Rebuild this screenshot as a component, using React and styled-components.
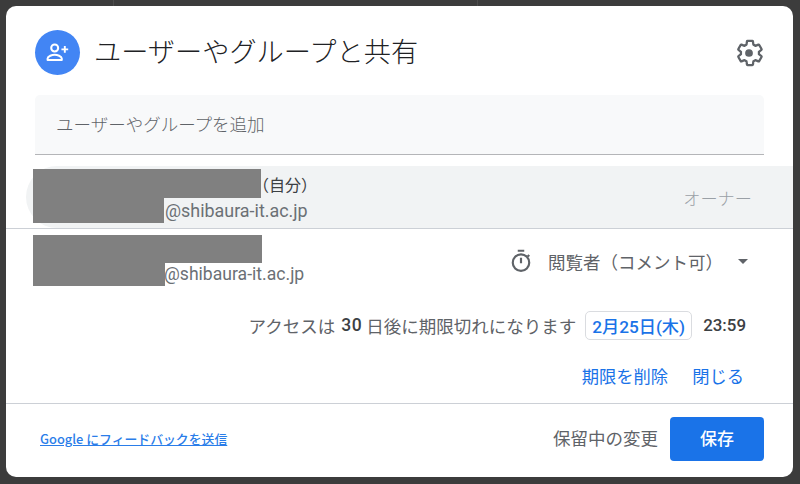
import React from 'react';
import styled, { createGlobalStyle } from 'styled-components';

const jp = `"Noto Sans CJK JP", sans-serif`;
const latin = `Roboto, "Noto Sans CJK JP", sans-serif`;

const GlobalStyle = createGlobalStyle`
  html, body {
    margin: 0;
    padding: 0;
    background: #3c3c3c;
    font-family: ${jp};
  }
`;

const Page = styled.div`
  position: relative;
  width: 800px;
  height: 484px;
  box-sizing: border-box;
  padding: 6px 7px 7px 6px;
  overflow: hidden;
`;

const BackdropLine = styled.div`
  position: absolute;
  top: 0;
  left: ${(p) => p.$left}px;
  width: 1px;
  height: 6px;
  background: #4c4c4c;
`;

const Dialog = styled.div`
  height: 100%;
  display: flex;
  flex-direction: column;
  background: #fff;
  border-radius: 10px;
  overflow: hidden;
`;

const Header = styled.header`
  height: 89px;
  flex: none;
  box-sizing: border-box;
  padding: 24px 29px 0;
  display: flex;
  align-items: flex-start;
`;

const IconBadge = styled.div`
  width: 45px;
  height: 45px;
  border-radius: 50%;
  background: #4285f4;
  display: flex;
  align-items: center;
  justify-content: center;
  flex: none;
`;

const Title = styled.h1`
  margin: -2px 0 0 14px;
  font-size: 27.2px;
  line-height: 45px;
  font-weight: 300;
  color: #202124;
  flex: 1;
`;

const GearButton = styled.div`
  width: 32px;
  height: 32px;
  margin: 7px -1px 0 0;
  display: flex;
  align-items: center;
  justify-content: center;
`;

const SearchBox = styled.div`
  height: 60px;
  flex: none;
  margin: 0 29px;
  box-sizing: border-box;
  padding: 0 0 2px 21px;
  display: flex;
  align-items: center;
  background: #f8f9fa;
  border-bottom: 1.5px solid #b4b5b8;
  border-radius: 5px 5px 0 0;
  font-size: 17.5px;
  font-weight: 300;
  color: #5f6368;
`;

const OwnerRow = styled.div`
  height: 62px;
  flex: none;
  margin: 11px 0 0 20px;
  display: flex;
  align-items: center;
  justify-content: space-between;
  background: #f1f3f4;
  border-radius: 31px 0 0 31px;
  padding-right: 41px;
`;

const Divider = styled.div`
  height: 1px;
  flex: none;
  background: #ccd0d6;
`;

const Identity = styled.div`
  position: relative;
  align-self: flex-start;
  display: flex;
  flex-direction: column;
  margin-left: ${(p) => p.$offset}px;
  padding-top: 6px;
`;

const NameLine = styled.div`
  height: 26px;
  line-height: 24px;
  padding-left: 88px;
  font-size: 16px;
  color: #3c4043;
`;

const Email = styled.div`
  height: 26px;
  line-height: 26px;
  font-family: ${latin};
  font-size: ${(p) => p.$size}px;
  color: #6b7075;
`;

const Redaction = styled.div`
  position: absolute;
  background: #808080;
  left: ${(p) => p.$left}px;
  top: ${(p) => p.$top}px;
  width: ${(p) => p.$w}px;
  height: ${(p) => p.$h}px;
`;

const OwnerLabel = styled.div`
  font-size: 17.2px;
  font-weight: 300;
  color: #9aa0a6;
`;

const ViewerRow = styled.div`
  height: 70px;
  flex: none;
  display: flex;
  justify-content: space-between;
  align-items: flex-start;
  padding-right: 45px;
`;

const RoleSelect = styled.div`
  display: flex;
  align-items: center;
  margin-top: 17px;
  height: 30px;
  font-size: 17.5px;
  color: #5f6368;
`;

const RoleText = styled.span`
  margin: 0 15px 0 14px;
  white-space: nowrap;
`;

const Caret = styled.span`
  width: 0;
  height: 0;
  border-left: 5px solid transparent;
  border-right: 5px solid transparent;
  border-top: 5px solid #5f6368;
`;

const ExpiryRow = styled.div`
  height: 32px;
  flex: none;
  margin-top: 10px;
  padding-right: 47px;
  display: flex;
  align-items: center;
  justify-content: flex-end;
  font-size: 17.5px;
  color: #5f6368;
`;

const Strong = styled.span`
  font-family: ${latin};
  font-weight: 500;
  letter-spacing: 0.6px;
  margin-left: 2px;
  color: #3c4043;
`;

const TimeText = styled.span`
  font-family: ${latin};
  font-size: 16.9px;
  font-weight: 500;
  color: #3c4043;
`;

const DateChip = styled.div`
  margin: 0 11px 0 9px;
  width: 107px;
  height: 29px;
  box-sizing: border-box;
  border: 1px solid #dadce0;
  border-radius: 5px;
  display: flex;
  align-items: center;
  justify-content: center;
  font-family: ${latin};
  font-size: 17.2px;
  font-weight: 500;
  color: #1a73e8;
`;

const ExpiryActions = styled.div`
  height: 30px;
  flex: none;
  margin: 19px 0 13px;
  padding-right: 49px;
  display: flex;
  justify-content: flex-end;
  align-items: center;
  gap: 24px;
`;

const ActionLink = styled.a`
  font-size: 17.3px;
  color: #1a73e8;
`;

const Footer = styled.footer`
  flex: 1;
  display: flex;
  align-items: center;
  justify-content: space-between;
  padding: 0 29px 4px 34px;
`;

const FeedbackLink = styled.a`
  font-size: 12.85px;
  font-weight: 500;
  color: #2a7de9;
  text-decoration: underline;
`;

const SaveArea = styled.div`
  display: flex;
  align-items: center;
  gap: 12px;
`;

const PendingText = styled.span`
  font-size: 17.5px;
  line-height: 24px;
  padding-bottom: 2px;
  color: #5f6368;
`;

const SaveButton = styled.button`
  width: 94px;
  height: 44px;
  border: 0;
  border-radius: 4px;
  padding: 0 0 2px;
  background: #1a73e8;
  color: #fff;
  font-family: ${jp};
  font-size: 17px;
  font-weight: 500;
`;

const AddPersonIcon = () => (
  <svg width="27" height="27" viewBox="0 0 24 24" fill="none" stroke="#fff" strokeWidth="1.8">
    <circle cx="9.5" cy="8" r="3.1" />
    <path d="M3.2 18.6v-1.2c0-2.2 4.2-3.4 6.3-3.4s6.3 1.2 6.3 3.4v1.2z" strokeLinejoin="round" />
    <path d="M18.5 6.2v6M15.5 9.2h6" strokeWidth="1.7" />
  </svg>
);

const GearIcon = () => (
  <svg width="32" height="32" viewBox="0 0 24 24" fill="none">
    <path
      d="M19.4 12.9c.05-.3.07-.6.07-.9s-.02-.6-.07-.9l1.9-1.5c.17-.13.22-.38.1-.58l-1.8-3.1c-.11-.2-.35-.27-.55-.2l-2.24.9c-.47-.36-.97-.66-1.52-.88l-.34-2.38a.44.44 0 0 0-.45-.38h-3.6c-.22 0-.41.16-.44.38l-.34 2.38c-.55.22-1.05.52-1.52.88l-2.24-.9a.45.45 0 0 0-.55.2l-1.8 3.1c-.12.2-.07.45.1.58l1.9 1.5c-.05.3-.08.6-.08.9s.03.6.08.9l-1.9 1.5c-.17.13-.22.38-.1.58l1.8 3.1c.11.2.35.27.55.2l2.24-.9c.47.36.97.66 1.52.88l.34 2.38c.03.22.22.38.44.38h3.6c.22 0 .41-.16.45-.38l.34-2.38c.55-.22 1.05-.52 1.52-.88l2.24.9c.2.07.44 0 .55-.2l1.8-3.1c.12-.2.07-.45-.1-.58z"
      stroke="#5f6368"
      strokeWidth="1.7"
      strokeLinejoin="round"
    />
    <circle cx="12" cy="12" r="2.9" fill="#5f6368" />
  </svg>
);

const TimerIcon = () => (
  <svg width="26" height="26" viewBox="0 0 24 24" fill="none" stroke="#5f6368" strokeWidth="2">
    <circle cx="12" cy="13.5" r="7.6" />
    <path d="M9 2.5h6M12 9v5" />
    <path d="M18.2 6.5l1.4 1.4" />
  </svg>
);

const App = () => {
  return (
    <Page>
      <GlobalStyle />
      <BackdropLine $left={113} />
      <BackdropLine $left={477} />
      <Dialog>
        <Header>
          <IconBadge>
            <AddPersonIcon />
          </IconBadge>
          <Title>ユーザーやグループと共有</Title>
          <GearButton>
            <GearIcon />
          </GearButton>
        </Header>
        <SearchBox>ユーザーやグループを追加</SearchBox>
        <OwnerRow>
          <Identity $offset={139}>
            <NameLine>（自分）</NameLine>
            <Email $size={17.9}>@shibaura-it.ac.jp</Email>
            <Redaction $left={-132} $top={3} $w={228} $h={29} />
            <Redaction $left={-132} $top={32} $w={131} $h={25} />
          </Identity>
          <OwnerLabel>オーナー</OwnerLabel>
        </OwnerRow>
        <Divider />
        <ViewerRow>
          <Identity $offset={158}>
            <NameLine />
            <Email $size={17.6}>@shibaura-it.ac.jp</Email>
            <Redaction $left={-131} $top={6} $w={229} $h={28} />
            <Redaction $left={-131} $top={34} $w={132} $h={23} />
          </Identity>
          <RoleSelect>
            <TimerIcon />
            <RoleText>閲覧者（コメント可）</RoleText>
            <Caret />
          </RoleSelect>
        </ViewerRow>
        <ExpiryRow>
          アクセスは&nbsp;<Strong>30</Strong>&nbsp;日後に期限切れになります
          <DateChip>2月25日(木)</DateChip>
          <TimeText>23:59</TimeText>
        </ExpiryRow>
        <ExpiryActions>
          <ActionLink>期限を削除</ActionLink>
          <ActionLink>閉じる</ActionLink>
        </ExpiryActions>
        <Divider />
        <Footer>
          <FeedbackLink>Google にフィードバックを送信</FeedbackLink>
          <SaveArea>
            <PendingText>保留中の変更</PendingText>
            <SaveButton>保存</SaveButton>
          </SaveArea>
        </Footer>
      </Dialog>
    </Page>
  );
};

export default App;
